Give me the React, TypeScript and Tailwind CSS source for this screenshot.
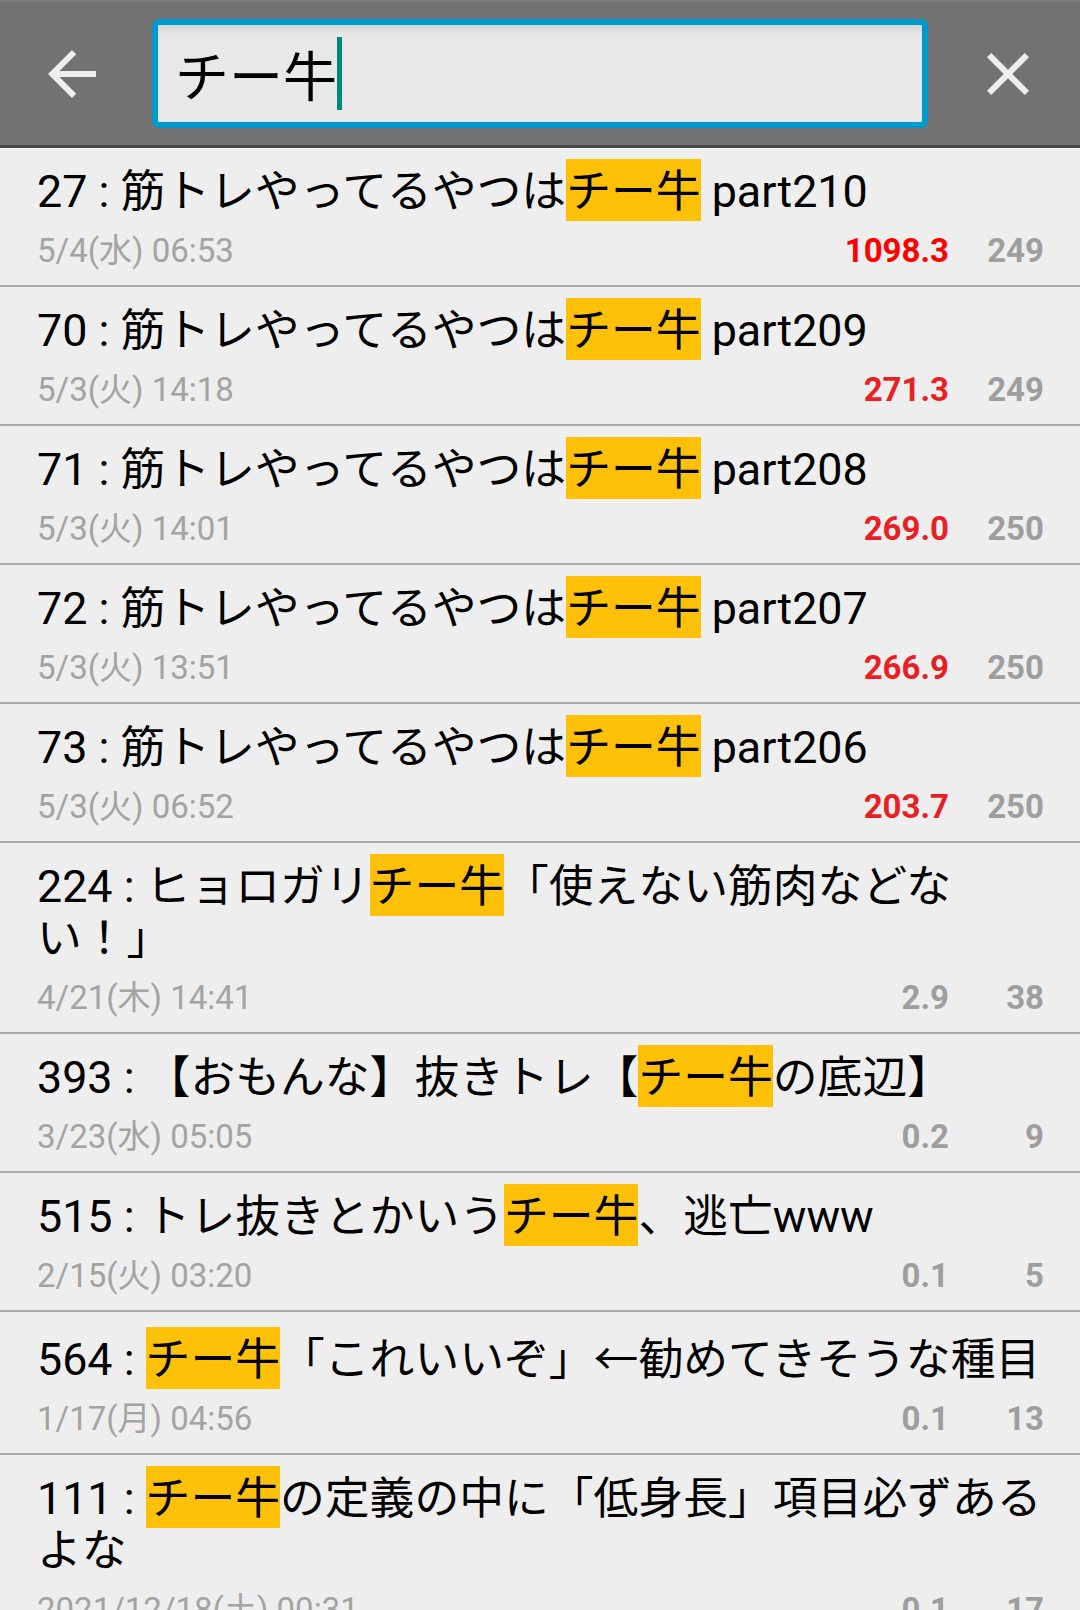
import React from "react";

type Row = {
  num: string;
  pre: string;
  post: string;
  date: string;
  speed: string;
  red?: string;
  count: string;
};

const rows: Row[] = [
  { num: "27", pre: "筋トレやってるやつは", post: " part210", date: "5/4(水) 06:53", speed: "1098.3", red: "text-[#ff0000]", count: "249" },
  { num: "70", pre: "筋トレやってるやつは", post: " part209", date: "5/3(火) 14:18", speed: "271.3", red: "text-[#ea1f25]", count: "249" },
  { num: "71", pre: "筋トレやってるやつは", post: " part208", date: "5/3(火) 14:01", speed: "269.0", red: "text-[#ea1f25]", count: "250" },
  { num: "72", pre: "筋トレやってるやつは", post: " part207", date: "5/3(火) 13:51", speed: "266.9", red: "text-[#ea1f25]", count: "250" },
  { num: "73", pre: "筋トレやってるやつは", post: " part206", date: "5/3(火) 06:52", speed: "203.7", red: "text-[#ea1f25]", count: "250" },
  { num: "224", pre: "ヒョロガリ", post: "「使えない筋肉などな\nい！」", date: "4/21(木) 14:41", speed: "2.9", count: "38" },
  { num: "393", pre: "【おもんな】抜きトレ【", post: "の底辺】", date: "3/23(水) 05:05", speed: "0.2", count: "9" },
  { num: "515", pre: "トレ抜きとかいう", post: "、逃亡www", date: "2/15(火) 03:20", speed: "0.1", count: "5" },
  { num: "564", pre: "", post: "「これいいぞ」←勧めてきそうな種目", date: "1/17(月) 04:56", speed: "0.1", count: "13" },
  { num: "111", pre: "", post: "の定義の中に「低身長」項目必ずある\nよな", date: "2021/12/18(土) 00:31", speed: "0.1", count: "17" },
];

function renderSeg(seg: string) {
  const idx = seg.indexOf("←");
  if (idx < 0) return seg;
  return (
    <>
      {seg.slice(0, idx)}
      <span className="font-['Noto_Sans_CJK_JP']">←</span>
      {seg.slice(idx + 1)}
    </>
  );
}

function renderPost(post: string) {
  const parts = post.split("\n");
  return parts.map((p, i) => (
    <React.Fragment key={i}>
      {i > 0 && <br />}
      {renderSeg(p)}
    </React.Fragment>
  ));
}

function ListRow({ r }: { r: Row }) {
  return (
    <div className="border-b-2 border-[#aaaaaa] pl-[37px] pr-[36px] pt-[18px] pb-[14px]">
      <div className="-mr-[12px] text-[44.8px] leading-[52px] text-black font-['Roboto','Noto_Sans_CJK_JP',sans-serif]">
        {r.num} : {r.pre}
        <span className="bg-[#ffc107] pt-[6px] pb-[3px]">チー牛</span>
        {renderPost(r.post)}
      </div>
      <div className="mt-[13px] flex items-baseline text-[33px] leading-[40px] font-['Roboto','Noto_Sans_CJK_JP',sans-serif]">
        <div className="flex-1 text-[#a3a3a3]">{r.date}</div>
        <div className={`font-bold text-right ${r.red ? r.red : "text-[#9e9e9e]"}`}>{r.speed}</div>
        <div className="w-[95px] text-right font-bold text-[#9e9e9e]">{r.count}</div>
      </div>
    </div>
  );
}

export default function App() {
  return (
    <div className="w-[1080px] h-[1610px] overflow-hidden bg-[#eeeeee]">
      <div className="h-[148px] bg-[#727272] border-t-2 border-[#7e7e7e] border-b-[3px] border-b-[#474747] flex items-center px-[36px] gap-[44px]">
        <svg width="72" height="72" viewBox="0 0 24 24" className="shrink-0">
          <path fill="#eeeeee" d="M20 11H7.83l5.59-5.59L12 4l-8 8 8 8 1.41-1.41L7.83 13H20v-2z" />
        </svg>
        <div className="flex-1 h-[109px] rounded-[7px] border-[6px] border-[#0099cc] bg-[#e8e8e8] shadow-[inset_0_8px_8px_-4px_rgba(0,0,0,0.10)] flex items-center pl-[17px]">
          <span className="text-[54px] leading-none text-black font-['Noto_Sans_CJK_JP',sans-serif]">チー牛</span>
          <span className="w-[5px] h-[73px] bg-[#00897b]" />
        </div>
        <svg width="72" height="72" viewBox="0 0 24 24" className="shrink-0">
          <path fill="#eeeeee" d="M19 6.41L17.59 5 12 10.59 6.41 5 5 6.41 10.59 12 5 17.59 6.41 19 12 13.41 17.59 19 19 17.59 13.41 12z" />
        </svg>
      </div>
      {rows.map((r, i) => (
        <ListRow key={i} r={r} />
      ))}
    </div>
  );
}
